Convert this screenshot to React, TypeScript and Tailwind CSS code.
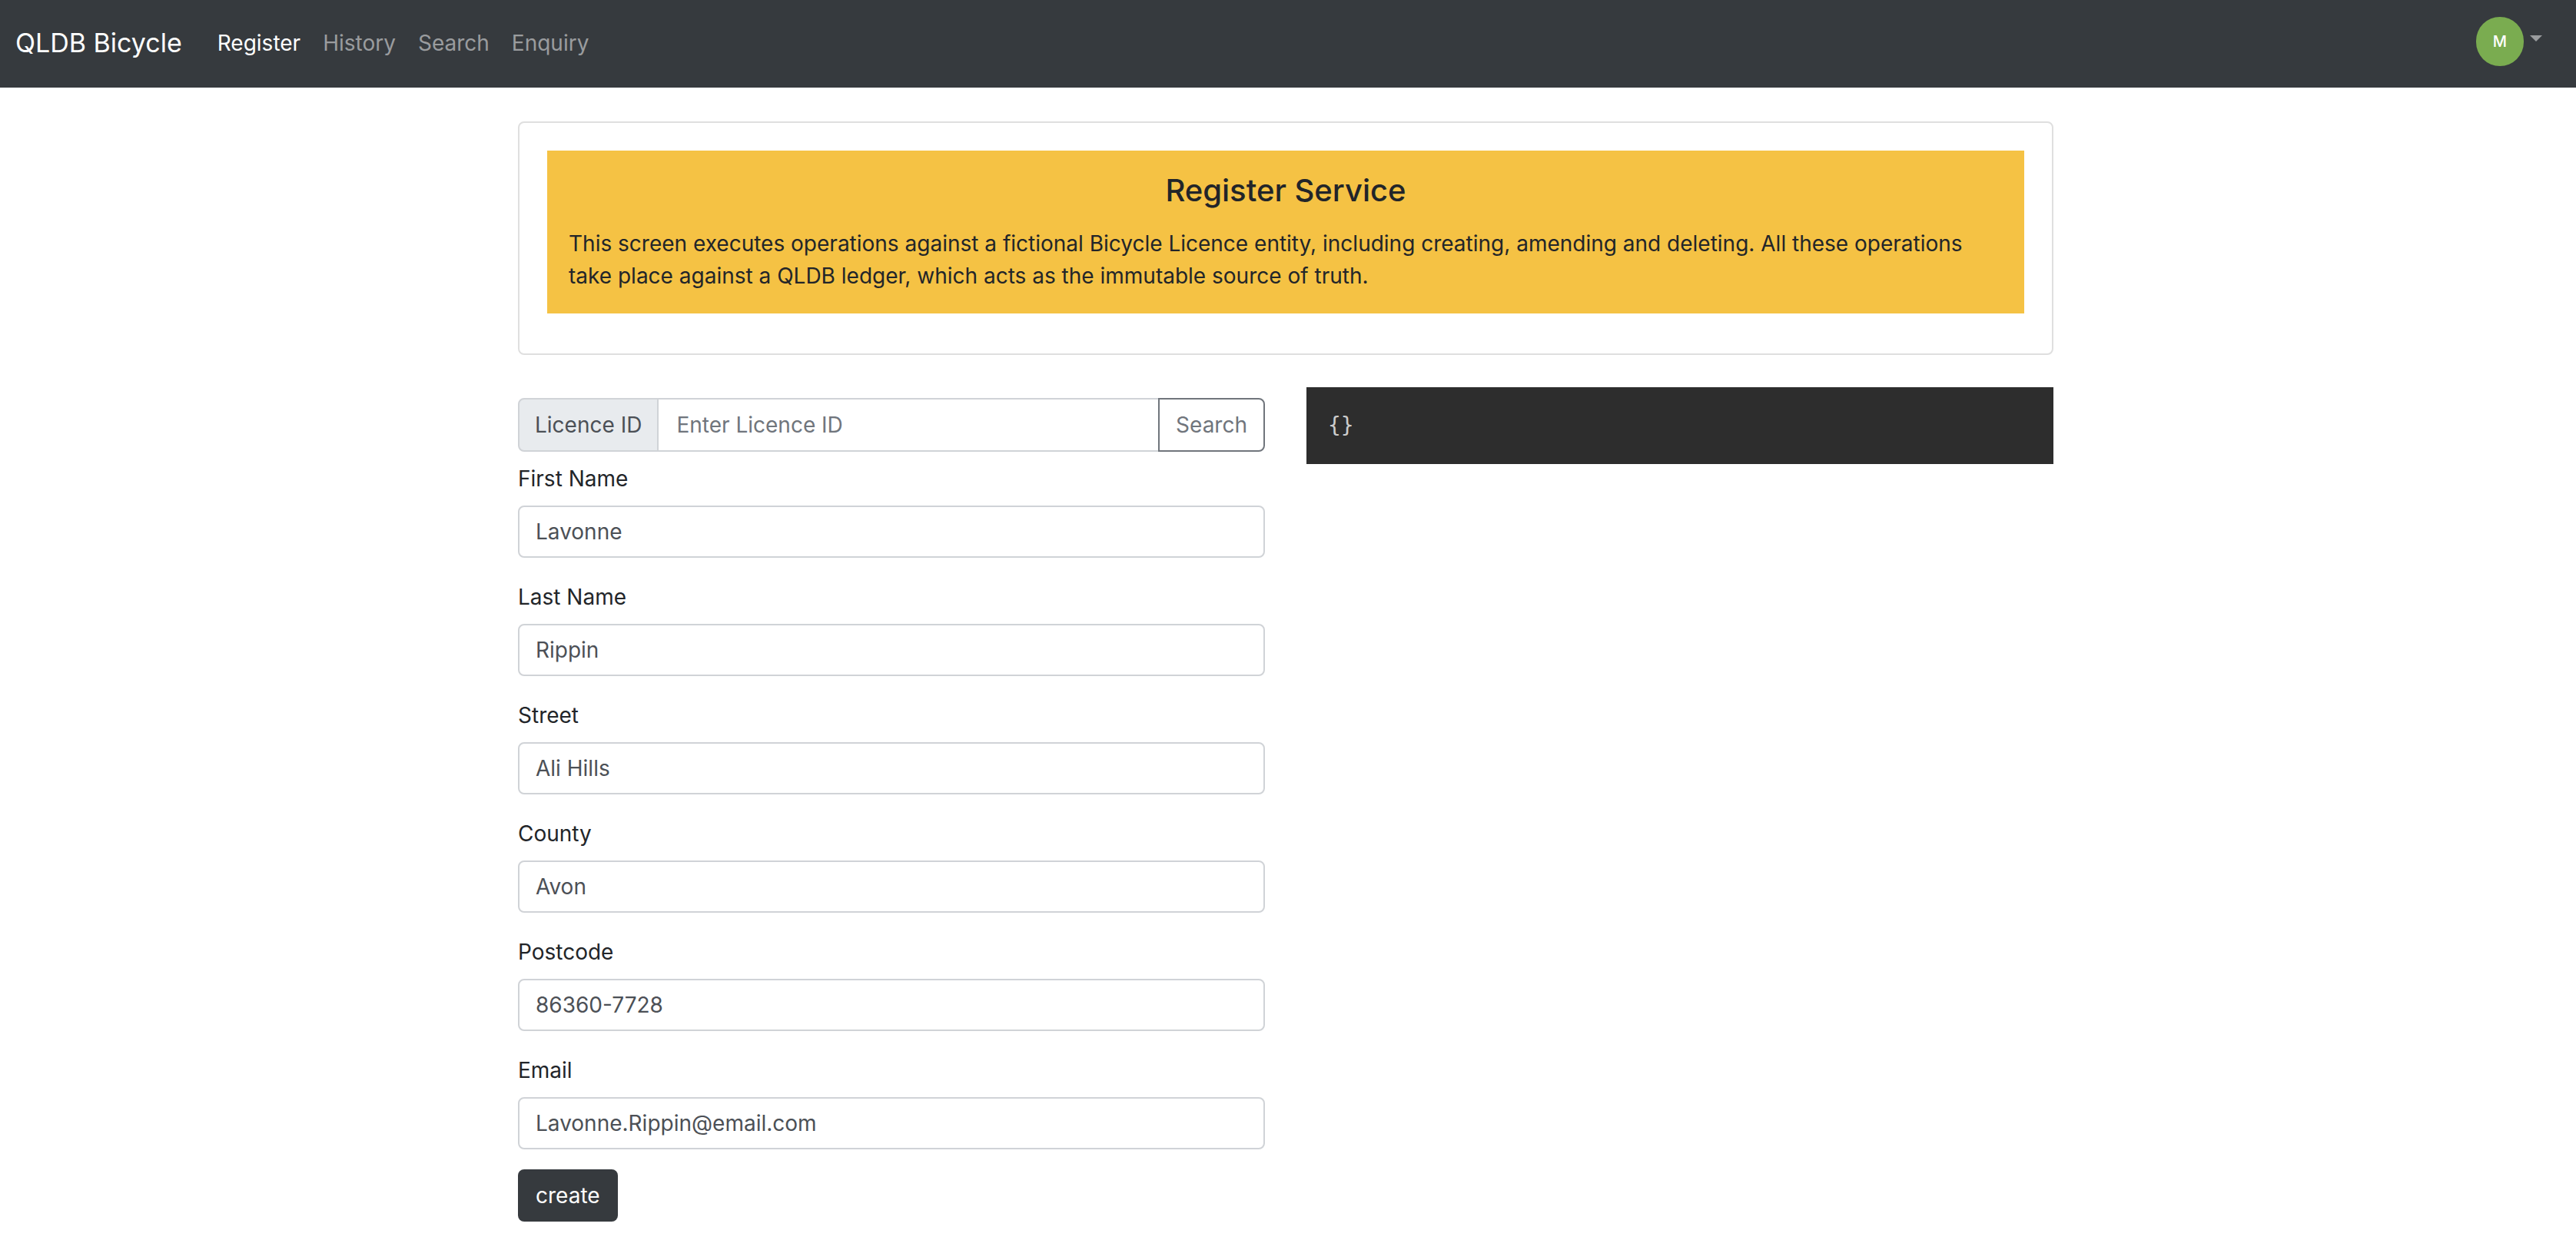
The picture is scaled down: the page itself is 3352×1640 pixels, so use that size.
const NAV_LINKS = ["Register", "History", "Search", "Enquiry"];

const FIELDS = [
  { id: "firstName", label: "First Name", value: "Lavonne", type: "text" },
  { id: "lastName", label: "Last Name", value: "Rippin", type: "text" },
  { id: "street", label: "Street", value: "Ali Hills", type: "text" },
  { id: "county", label: "County", value: "Avon", type: "text" },
  { id: "postcode", label: "Postcode", value: "86360-7728", type: "text" },
  { id: "email", label: "Email", value: "Lavonne.Rippin@email.com", type: "email" },
];

function Navbar() {
  return (
    <nav className="flex items-center bg-[#363a3e] pt-[22px] pr-11 pb-6 pl-5 text-white">
      <a href="#" className="text-[34px] leading-[54px]">
        QLDB Bicycle
      </a>
      <ul className="ml-[46px] flex gap-[29px]">
        {NAV_LINKS.map((name, i) => (
          <li key={name}>
            <a href="#" className={i === 0 ? "text-white" : "text-[#9a9c9e]"}>
              {name}
            </a>
          </li>
        ))}
      </ul>
      <button type="button" aria-label="Account menu" className="ml-auto flex items-center gap-2 pb-1">
        <span className="flex h-16 w-[62px] items-center justify-center rounded-full bg-[#7aac50] text-xl font-medium text-white">
          M
        </span>
        <span className="mb-2 border-x-8 border-t-8 border-x-transparent border-t-[#9a9c9e]" />
      </button>
    </nav>
  );
}

function Banner() {
  return (
    <section className="rounded-lg border-2 border-[#dfdfdf] px-9 pt-9 pb-[52px]">
      <div className="bg-[#f5c244] p-7">
        <h1 className="mb-6 text-center text-[40px] leading-[48px] font-medium">Register Service</h1>
        <p>
          This screen executes operations against a fictional Bicycle Licence entity, including creating,
          amending and deleting. All these operations take place against a QLDB ledger, which acts as the
          immutable source of truth.
        </p>
      </div>
    </section>
  );
}

function LicenceForm() {
  return (
    <form className="pt-3.5" onSubmit={(e) => e.preventDefault()}>
      <div className="mb-3.5 flex h-[70px]">
        <label
          htmlFor="licenceId"
          className="flex items-center rounded-l-lg border-2 border-[#d0d3d7] bg-[#e8ebee] px-5 text-[#4c5056]"
        >
          Licence ID
        </label>
        <input
          id="licenceId"
          type="text"
          placeholder="Enter Licence ID"
          className="min-w-0 flex-1 border-y-2 border-[#d0d3d7] px-[23px] text-[#4c5056] placeholder:text-[#70757c]"
        />
        <button type="button" className="rounded-r-lg border-2 border-[#70757c] px-[21px] text-[#70757c]">
          Search
        </button>
      </div>
      <div className="flex flex-col gap-[30px]">
        {FIELDS.map((f) => (
          <div key={f.id} className="flex flex-col gap-3.5">
            <label htmlFor={f.id}>{f.label}</label>
            <input
              id={f.id}
              type={f.type}
              defaultValue={f.value}
              className="h-[68px] rounded-lg border-2 border-[#d0d3d7] px-[21px] text-[#4c5056]"
            />
          </div>
        ))}
      </div>
      <button type="submit" className="mt-[26px] h-[68px] rounded-lg bg-[#363a3e] px-[23px] text-white">
        create
      </button>
    </form>
  );
}

export default function App() {
  return (
    <div className="min-h-screen bg-white font-['Inter',sans-serif] text-[28px] leading-[42px] text-[#222529]">
      <Navbar />
      <div className="pt-11 pr-1.5 pb-12">
        <main className="mx-auto flex max-w-[1998px] flex-col gap-[42px]">
          <Banner />
          <div className="grid grid-cols-2 items-start gap-x-[54px]">
            <LicenceForm />
            <pre className="bg-[#2d2d2d] p-7 font-['DejaVu_Sans_Mono',monospace] leading-[44px] text-[#cccccc]">
              {"{}"}
            </pre>
          </div>
        </main>
      </div>
    </div>
  );
}
